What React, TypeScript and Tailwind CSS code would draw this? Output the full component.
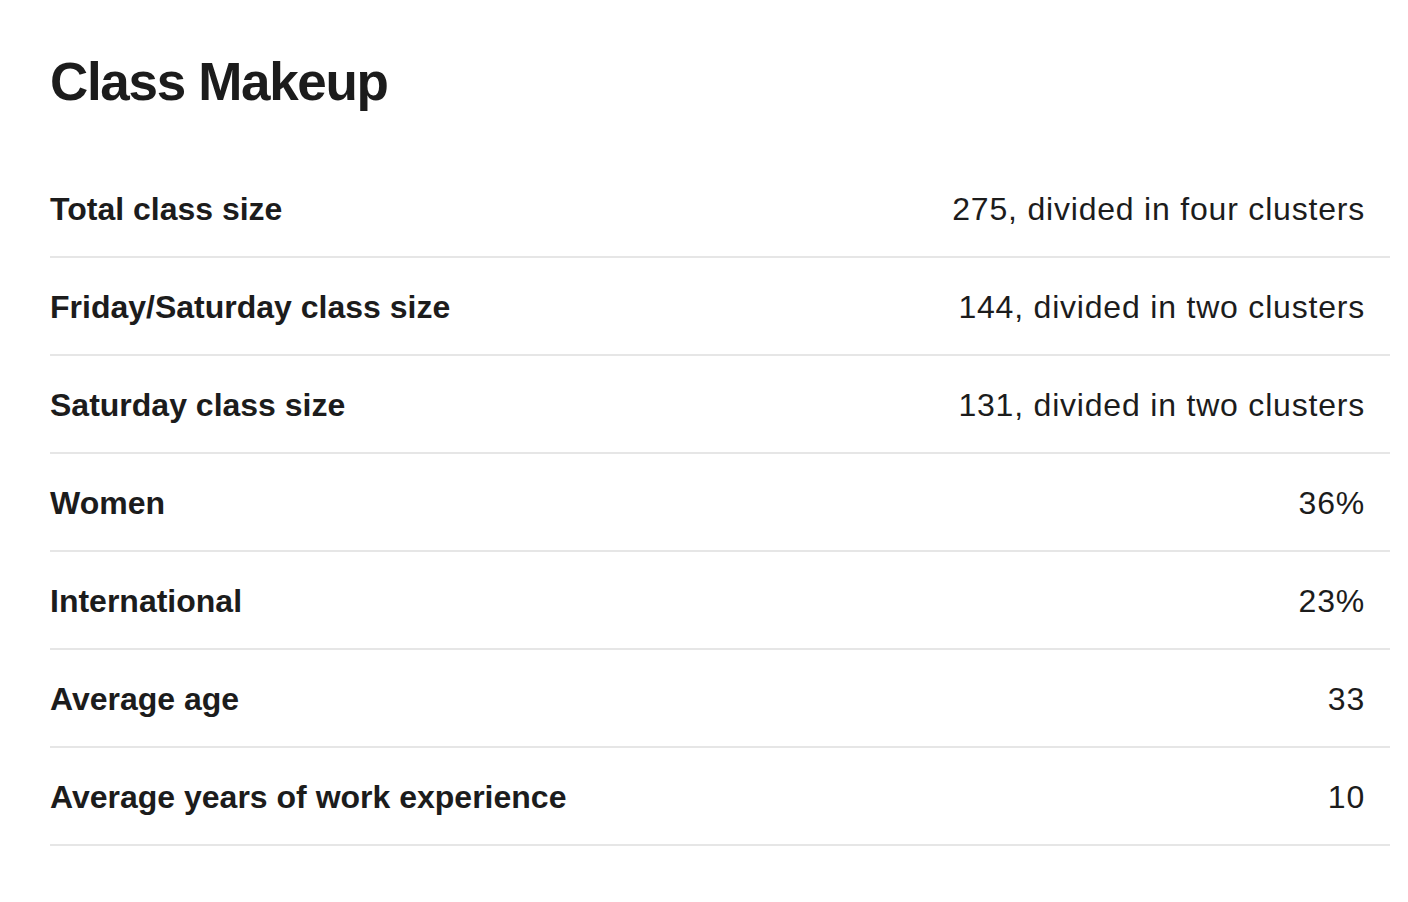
const rows = [
  { label: 'Total class size', value: '275, divided in four clusters' },
  { label: 'Friday/Saturday class size', value: '144, divided in two clusters' },
  { label: 'Saturday class size', value: '131, divided in two clusters' },
  { label: 'Women', value: '36%' },
  { label: 'International', value: '23%' },
  { label: 'Average age', value: '33' },
  { label: 'Average years of work experience', value: '10' },
]

export default function App() {
  return (
    <div className="min-h-screen bg-white font-['Liberation_Sans',Arial,sans-serif] text-[#1c1c1c]">
      <div className="pl-[50px] pr-[18px] pt-[55px]">
        {/* Header */}
        <h1 className="text-[53px] font-bold leading-none tracking-[-0.025em]">Class Makeup</h1>

        {/* Stats table */}
        <div className="mt-[52px]">
          {rows.map((row) => (
            <div
              key={row.label}
              className="flex items-start justify-between border-b-2 border-[#e6e6e6] pt-[33px] pb-[31px] pr-[25px]"
            >
              <span className="text-[32px] font-bold leading-[32px]">{row.label}</span>
              <span className="text-[32px] leading-[32px] tracking-[0.025em]">{row.value}</span>
            </div>
          ))}
        </div>
      </div>
    </div>
  )
}
